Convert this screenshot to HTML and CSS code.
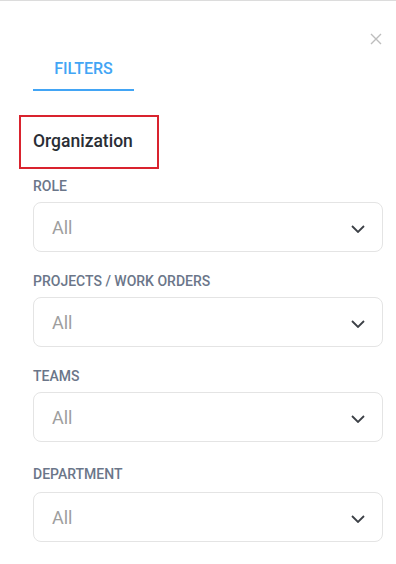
FILE: index.html
```html
<!DOCTYPE html>
<html lang="en">
<head>
  <meta charset="UTF-8">
  <meta name="viewport" content="width=device-width, initial-scale=1.0">
  <title>Filters</title>
  <link rel="stylesheet" href="styles.css">
</head>
<body>

<div class="drawer">
  <div class="drawer-head">
    <button class="close-btn" aria-label="Close">
      <svg width="12" height="12" viewBox="0 0 12 12">
        <path d="M1 1 L11 11 M11 1 L1 11" stroke="#bdbdbd" stroke-width="1.4" fill="none"/>
      </svg>
    </button>
  </div>

  <div class="tabs">
    <a href="#" class="tab active">FILTERS</a>
  </div>

  <h2 class="section-title">Organization</h2>

  <!-- filter fields -->
  <div class="field">
    <label>ROLE</label>
    <div class="select">
      <span>All</span>
      <svg class="chevron" width="14" height="8" viewBox="0 0 14 8"><path d="M1 1 L7 7 L13 1" stroke="#3c4046" stroke-width="1.8" fill="none"/></svg>
    </div>
  </div>

  <div class="field">
    <label>PROJECTS / WORK ORDERS</label>
    <div class="select">
      <span>All</span>
      <svg class="chevron" width="14" height="8" viewBox="0 0 14 8"><path d="M1 1 L7 7 L13 1" stroke="#3c4046" stroke-width="1.8" fill="none"/></svg>
    </div>
  </div>

  <div class="field">
    <label>TEAMS</label>
    <div class="select">
      <span>All</span>
      <svg class="chevron" width="14" height="8" viewBox="0 0 14 8"><path d="M1 1 L7 7 L13 1" stroke="#3c4046" stroke-width="1.8" fill="none"/></svg>
    </div>
  </div>

  <div class="field field-last">
    <label>DEPARTMENT</label>
    <div class="select">
      <span>All</span>
      <svg class="chevron" width="14" height="8" viewBox="0 0 14 8"><path d="M1 1 L7 7 L13 1" stroke="#3c4046" stroke-width="1.8" fill="none"/></svg>
    </div>
  </div>
</div>

</body>
</html>
```

FILE: styles.css
```css
:root {
  --primary: #42a5f5;
  --label: #6b7689;
  --text: #2a2e35;
  --muted: #9e9e9e;
  --line: #e4e4e4;
}

body {
  margin: 0;
  padding: 0;
  background: #fff;
  font-family: Roboto, 'Liberation Sans', Arial, sans-serif;
}

.drawer {
  border-top: 1px solid #dcdcdc;
  padding: 0 13px 20px 33px;
}

.drawer-head {
  display: flex;
  justify-content: flex-end;
  padding-top: 32px;
}

.close-btn {
  background: none;
  border: none;
  padding: 0;
  margin-right: 1px;
  width: 12px;
  height: 12px;
  display: block;
  cursor: pointer;
}

.close-btn svg {
  display: block;
}

.tabs {
  display: flex;
  margin-top: 14px;
}

.tab {
  display: block;
  width: 101px;
  text-align: center;
  font-size: 16px;
  line-height: 20px;
  font-weight: 500;
  color: var(--primary);
  text-decoration: none;
  padding-bottom: 10px;
  border-bottom: 2px solid var(--primary);
}

.section-title {
  box-sizing: border-box;
  width: 140px;
  height: 54px;
  margin: 24px 0 0 -14px;
  padding: 0 0 2px 12px;
  display: flex;
  align-items: center;
  border: 2px solid #d9232e;
  font-size: 17.5px;
  line-height: 22px;
  font-weight: 500;
  color: var(--text);
}

.field {
  margin-top: 21px;
}

.section-title + .field {
  margin-top: 9px;
}

.field-last {
  margin-top: 24px;
}

.field label {
  display: block;
  font-size: 14px;
  line-height: 16px;
  font-weight: 500;
  color: var(--label);
  margin-bottom: 8px;
}

.field-last label {
  margin-bottom: 10px;
}

.select {
  box-sizing: border-box;
  height: 50px;
  display: flex;
  align-items: center;
  justify-content: space-between;
  padding: 0 17px 0 18px;
  border: 1px solid var(--line);
  border-radius: 8px;
  cursor: pointer;
}

.select span {
  font-size: 18px;
  color: var(--muted);
}

.chevron {
  display: block;
  margin-top: 3px;
}
```
